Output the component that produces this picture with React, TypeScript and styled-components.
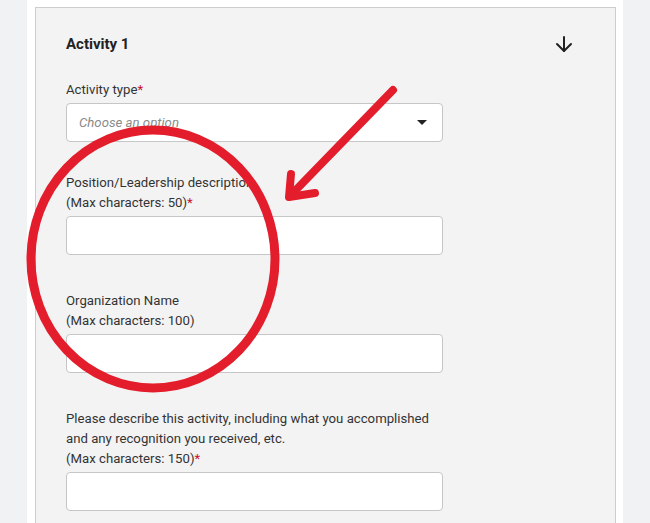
import React from 'react';
import styled, { createGlobalStyle } from 'styled-components';
import { ArrowDown } from 'lucide-react';

const GlobalStyle = createGlobalStyle`
    html, body {
        margin: 0;
        padding: 0;
        overflow: hidden;
        background: #ffffff;
    }
    * { box-sizing: border-box; }
`

const Page = styled.div`
    position: relative;
    display: flex;
    height: 523px;
    overflow: hidden;
    font-family: Roboto, "Liberation Sans", sans-serif;
    color: #333333;
`
const Rail = styled.div<{ $grow?: boolean }>`
    width: 27px;
    flex: ${(p) => (p.$grow ? '1' : '0 0 27px')};
    background: #f1f2f4;
`
const Panel = styled.section`
    flex: 0 0 581px;
    margin: 7px 7px 0 8px;
    border: 1px solid #cdcdcd;
    border-bottom: none;
    background: #f3f3f3;
    padding: 24px 39px 0 30px;
`
const Header = styled.div`
    display: flex;
    justify-content: space-between;
    align-items: center;
    height: 24px;
    margin-bottom: 24px;
`
const Title = styled.h2`
    margin: 0;
    font-size: 15px;
    font-weight: 700;
    color: #222222;
`
const ToggleButton = styled.button`
    display: flex;
    border: none;
    background: none;
    padding: 0;
    color: #222222;
`
const Field = styled.div<{ $after: number }>`
    width: 377px;
    margin-bottom: ${(p) => p.$after}px;
`
const Label = styled.label`
    display: block;
    font-size: 13.2px;
    line-height: 20px;
    color: #333333;
    margin-bottom: 3px;
`
const Required = styled.span`
    color: #c8102e;
`
const Box = styled.div`
    height: 39px;
    background: #ffffff;
    border: 1px solid #c6c6c6;
    border-radius: 4px;
    display: flex;
    align-items: center;
    justify-content: space-between;
    padding: 0 15px 0 12px;
`
const Placeholder = styled.span`
    font-size: 13.2px;
    font-style: italic;
    color: #8a8a8a;
`
const Caret = styled.span`
    width: 0;
    height: 0;
    border-left: 5px solid transparent;
    border-right: 5px solid transparent;
    border-top: 5px solid #222222;
`
const Markup = styled.svg`
    position: absolute;
    inset: 0;
    pointer-events: none;
`

const fields = [
    { label: ['Position/Leadership description', '(Max characters: 50)'], required: true, after: 36 },
    { label: ['Organization Name', '(Max characters: 100)'], required: false, after: 36 },
    {
        label: [
            'Please describe this activity, including what you accomplished',
            'and any recognition you received, etc.',
            '(Max characters: 150)',
        ],
        required: true,
        after: 20,
    },
]

export default function App() {
    return (
        <Page>
            <GlobalStyle />
            <Rail />
            <Panel>
                <Header>
                    <Title>Activity 1</Title>
                    <ToggleButton aria-label="Collapse">
                        <ArrowDown size={24} strokeWidth={2} />
                    </ToggleButton>
                </Header>
                <Field $after={31}>
                    <Label>Activity type<Required>*</Required></Label>
                    <Box>
                        <Placeholder>Choose an option</Placeholder>
                        <Caret />
                    </Box>
                </Field>
                {fields.map((f) => (
                    <Field key={f.label[0]} $after={f.after}>
                        <Label>
                            {f.label.map((line, i) => (
                                <React.Fragment key={line}>
                                    {line}
                                    {i === f.label.length - 1 && f.required ? <Required>*</Required> : null}
                                    {i < f.label.length - 1 ? <br /> : null}
                                </React.Fragment>
                            ))}
                        </Label>
                        <Box />
                    </Field>
                ))}
            </Panel>
            <Rail $grow />
            <Markup width="650" height="523" viewBox="0 0 650 523">
                <g fill="none" stroke="#e31d2b" strokeLinecap="round" strokeLinejoin="round">
                    <ellipse cx="153" cy="259" rx="122" ry="129" strokeWidth="9" />
                    <path d="M393 90 L290 196" strokeWidth="8" />
                    <path d="M291 174 L289 197 L315 193" strokeWidth="8" />
                </g>
            </Markup>
        </Page>
    )
}
